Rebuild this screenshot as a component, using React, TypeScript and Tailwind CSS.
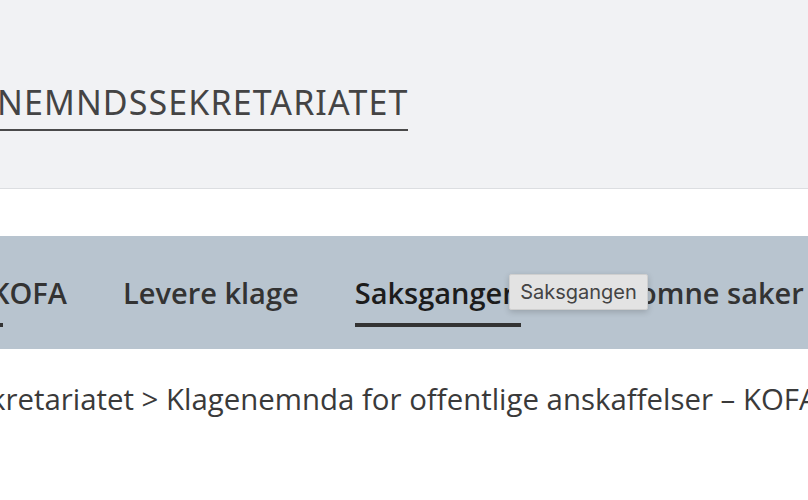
import React from 'react';

const navItems = [
  { label: 'KOFA', active: false },
  { label: 'Levere klage', active: false },
  { label: 'Saksgangen', active: true },
  { label: 'Innkomne saker', active: false },
];

export default function App() {
  return (
    <div className="w-[808px] h-[500px] overflow-hidden bg-white" style={{ fontFamily: '"Open Sans", sans-serif' }}>
      {/* Header */}
      <header className="h-[189px] bg-[#f1f2f4] border-b border-[#dcdee1] overflow-hidden">
        <div className="pt-[79px] -ml-[3px]">
          <a
            href="#"
            className="inline-block pb-[4px] border-b-2 border-[#4a4a4a] font-['Noto_Sans',sans-serif] text-[34px] leading-[46px] tracking-[1.1px] text-[#444]"
          >
            NEMNDSSEKRETARIATET
          </a>
        </div>
      </header>

      {/* Nav */}
      <nav className="relative mt-[47px] h-[113px] bg-[#b8c4cf] overflow-hidden">
        <div className="flex items-start gap-14 pt-[37px] -ml-[9px] whitespace-nowrap">
          <div className="flex flex-col">
            <span className="text-[29px] leading-[40px] font-semibold text-[#333]">KOFA</span>
            <span className="mt-[10px] ml-[9px] h-[4px] w-[3px] bg-[#333]"></span>
          </div>
          {navItems.slice(1).map((item) => (
            <div key={item.label} className="flex flex-col">
              <span
                className={
                  item.active
                    ? 'text-[29px] leading-[40px] font-semibold text-[#1c1c1c]'
                    : 'text-[29px] leading-[40px] font-semibold text-[#333]'
                }
              >
                {item.label}
              </span>
              {item.active && <span className="mt-[10px] h-[4px] w-full bg-[#333]"></span>}
            </div>
          ))}
        </div>

        {/* Tooltip */}
        <div className="absolute left-[509px] top-[38px] h-[36px] w-[139px] flex items-center justify-center bg-[#e3e3e3] border border-[#cfcfcf] rounded-[2px] shadow-[0_2px_6px_rgba(0,0,0,0.18)] font-['Inter',sans-serif] text-[20px] text-[#444]">
          Saksgangen
        </div>
      </nav>

      {/* Breadcrumb */}
      <div className="mt-[30px] -ml-[10px] whitespace-nowrap text-[29.4px] leading-[41px] text-[#3a3a3a]">
        kretariatet &gt; Klagenemnda for offentlige anskaffelser – KOFA
      </div>
    </div>
  );
}
